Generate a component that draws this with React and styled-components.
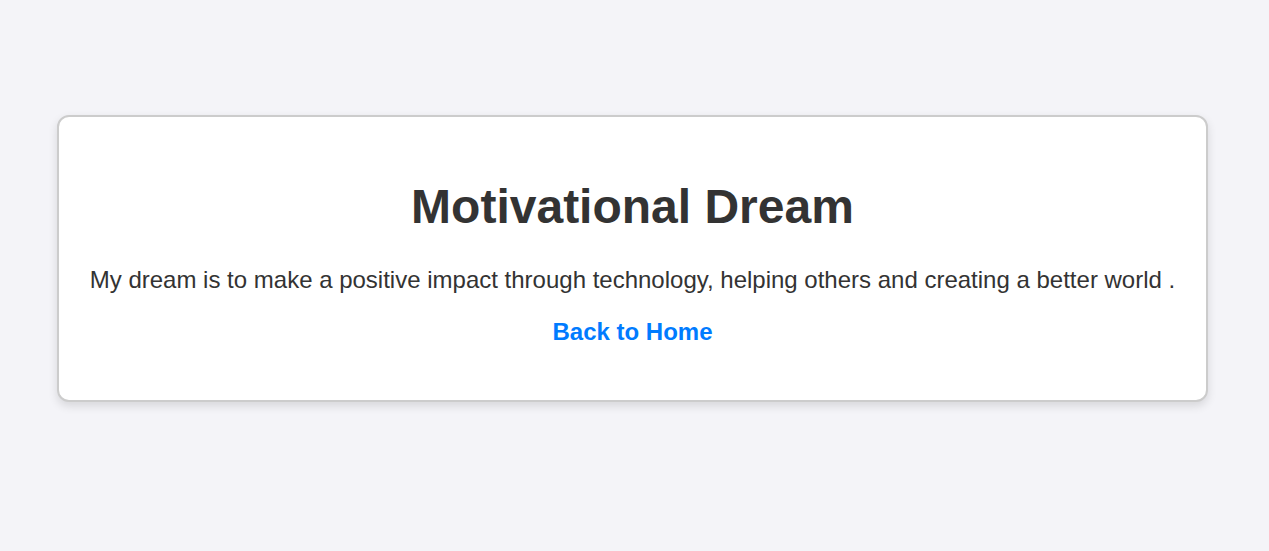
import React from 'react'
import styled, { createGlobalStyle } from 'styled-components'

const GlobalStyle = createGlobalStyle`
  html, body {
    margin: 0;
    padding: 0;
  }
  body {
    background: #f4f4f8;
    font-family: "Liberation Sans", Arial, sans-serif;
    color: #333;
  }
`

const Page = styled.main`
  min-height: 551px;
  padding: 115px 0 0 57px;
  box-sizing: border-box;
`

const Card = styled.section`
  width: 1151px;
  box-sizing: border-box;
  background: #fff;
  border: 2px solid #cccccc;
  border-radius: 12px;
  box-shadow: 0 4px 10px rgba(0, 0, 0, 0.12);
  padding: 30px;
  text-align: center;
`

const Title = styled.h1`
  font-size: 48px;
  font-weight: bold;
  margin: 32px 0;
  color: #333;
`

const Text = styled.p`
  font-size: 24px;
  margin: 24px 0;
`

const HomeLink = styled.a`
  font-weight: bold;
  color: #007bff;
  text-decoration: none;
`

const App = () => (
  <>
    <GlobalStyle />
    <Page>
      <Card>
        <Title>Motivational Dream</Title>
        <Text>
          My dream is to make a positive impact through technology, helping others and creating a better world .
        </Text>
        <Text>
          <HomeLink href="#">Back to Home</HomeLink>
        </Text>
      </Card>
    </Page>
  </>
)

export default App
